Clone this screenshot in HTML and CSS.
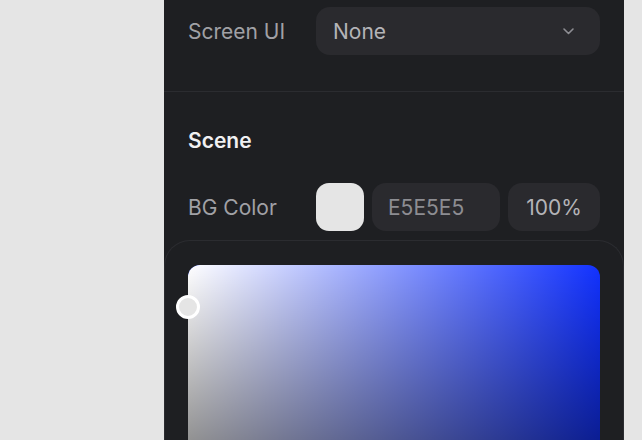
FILE: index.html
```html
<!DOCTYPE html>
<html>
<head>
<meta charset="utf-8">
<link rel="stylesheet" href="styles.css">
</head>
<body>
<div class="page">
  <div class="spacer"></div>
  <div class="panel">
    <div class="row top-row">
      <span class="label">Screen UI</span>
      <div class="select">
        <span>None</span>
        <svg class="chev" width="16" height="16" viewBox="0 0 16 16"><path d="M3 6 L7.5 10.5 L12 6" fill="none" stroke="#8e8e93" stroke-width="1.6" stroke-linecap="round" stroke-linejoin="round"/></svg>
      </div>
    </div>
    <div class="divider"></div>
    <div class="section-title">Scene</div>
    <div class="row color-row">
      <span class="label">BG Color</span>
      <div class="controls">
        <div class="swatch"></div>
        <div class="field hex">E5E5E5</div>
        <div class="field pct">100%</div>
      </div>
    </div>
    <div class="picker">
      <div class="sv">
        <div class="sv-white"></div>
        <div class="sv-black"></div>
        <div class="handle"></div>
      </div>
    </div>
  </div>
</div>
</body>
</html>
```
FILE: styles.css
```css
html, body {
  margin: 0;
  padding: 0;
  background: #e5e5e5;
  height: 100%;
  overflow: hidden;
  font-family: Inter, "Noto Sans", sans-serif;
}
.page {
  display: flex;
  height: 440px;
}
.spacer {
  width: 164px;
  flex: none;
}
.panel {
  width: 460px;
  flex: none;
  background: #1e1f22;
  display: flex;
  flex-direction: column;
  overflow: hidden;
}
.panel > * {
  flex: none;
}
.row {
  display: flex;
  align-items: center;
  padding: 0 24px;
}
.top-row {
  margin-top: 7px;
  height: 48px;
}
.label {
  width: 128px;
  flex: none;
  color: #a1a1a6;
  font-size: 21px;
}
.select {
  flex: 1;
  height: 48px;
  background: #2a2a2e;
  border-radius: 14px;
  display: flex;
  align-items: center;
  justify-content: space-between;
  padding: 0 23px 0 17px;
  color: #b4b4b8;
  font-size: 21px;
}
.chev { display: block; }
.divider {
  height: 1px;
  background: #2b2c30;
  margin-top: 36px;
}
.section-title {
  padding: 0 24px;
  margin-top: 37px;
  color: #f0f0f2;
  font-size: 21px;
  font-weight: 600;
  line-height: 24px;
}
.color-row {
  margin-top: 30px;
  height: 48px;
}
.controls {
  flex: 1;
  display: flex;
  gap: 8px;
  height: 48px;
}
.swatch {
  width: 48px;
  height: 48px;
  border-radius: 13px;
  background: #e5e5e5;
}
.field {
  background: #2a2a2e;
  border-radius: 14px;
  display: flex;
  align-items: center;
  font-size: 21px;
}
.hex {
  width: 128px;
  padding-left: 16px;
  box-sizing: border-box;
  color: #8d8d92;
}
.pct {
  flex: 1;
  justify-content: center;
  color: #b4b4b8;
}
.picker {
  margin-top: 9px;
  border: 1px solid #2b2c30;
  border-bottom: none;
  border-radius: 26px 26px 0 0;
  padding: 24px 23px 0 23px;
  flex: 1 1 auto;
}
.sv {
  position: relative;
  height: 412px;
  border-radius: 12px;
  background: #1232ff;
}
.sv-white, .sv-black {
  position: absolute;
  inset: 0;
  border-radius: 12px;
}
.sv-white {
  background: linear-gradient(to right, #ffffff, rgba(255,255,255,0));
}
.sv-black {
  background: linear-gradient(to bottom, rgba(0,0,0,0), #000000);
}
.handle {
  position: absolute;
  left: -12px;
  top: 30px;
  width: 18px;
  height: 18px;
  border: 3px solid #ffffff;
  border-radius: 50%;
  background: #e5e5e5;
}
```
